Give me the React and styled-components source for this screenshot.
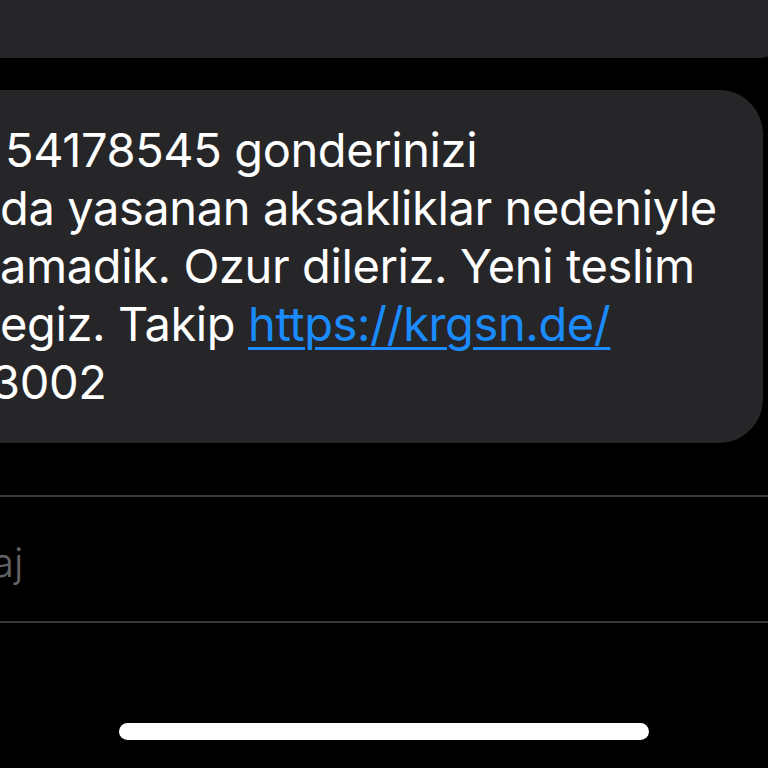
import React from "react";
import styled, { createGlobalStyle } from "styled-components";

const lines = [
  { indent: 5, parts: [{ text: "54178545 gonderinizi" }] },
  { indent: 0, parts: [{ text: "da yasanan aksakliklar nedeniyle" }] },
  { indent: 0, parts: [{ text: "amadik. Ozur dileriz. Yeni teslim" }] },
  {
    indent: 0,
    parts: [{ text: "egiz. Takip " }, { text: "https://krgsn.de/", link: true }],
  },
  { indent: -9, parts: [{ text: "3002" }] },
];

const GlobalStyle = createGlobalStyle`
  html, body {
    margin: 0;
    padding: 0;
    background: #000;
    overflow: hidden;
  }
  body {
    font-family: Inter, "Noto Sans", "Liberation Sans", sans-serif;
  }
`;

const Screen = styled.div`
  width: 768px;
  height: 768px;
  background: #000;
  display: flex;
  flex-direction: column;
  overflow: hidden;
`;

const Bubble = styled.div`
  margin-left: -60px;
  width: ${(p) => p.$width}px;
  background: #262629;
  border-radius: ${(p) => p.$radius};
  box-sizing: border-box;
  flex-shrink: 0;
`;

const TopBubble = styled(Bubble)`
  height: 58px;
`;

const MessageBubble = styled(Bubble)`
  margin-top: 32px;
  height: 353px;
  padding: 31px 0 0 60px;
`;

const Line = styled.div`
  margin-left: ${(p) => p.$indent}px;
  font-size: 47px;
  line-height: 58px;
  color: #fff;
  white-space: nowrap;
  letter-spacing: -0.4px;
`;

const Link = styled.span`
  color: #1a8cff;
  text-decoration: underline;
  text-decoration-thickness: 3px;
  text-underline-offset: 6px;
`;

const InputRow = styled.div`
  margin-top: 52px;
  height: 124px;
  border-top: 2px solid #3a3a3c;
  border-bottom: 2px solid #3a3a3c;
  display: flex;
  align-items: center;
  flex-shrink: 0;
`;

const Placeholder = styled.span`
  margin-left: -8px;
  margin-top: 6px;
  font-size: 40px;
  color: #636366;
  font-weight: 300;
`;

const HomeArea = styled.div`
  flex: 1;
  display: flex;
  justify-content: center;
  padding-top: 100px;
`;

const HomeIndicator = styled.div`
  width: 530px;
  height: 17px;
  border-radius: 9px;
  background: #fff;
`;

export default function App() {
  return (
    <>
      <GlobalStyle />
      <Screen>
        <TopBubble $width={843} $radius="0 0 24px 0" />
        <MessageBubble $width={823} $radius="0 44px 44px 0">
          {lines.map((line, i) => (
            <Line key={i} $indent={line.indent}>
              {line.parts.map((part, j) =>
                part.link ? (
                  <Link key={j}>{part.text}</Link>
                ) : (
                  <span key={j}>{part.text}</span>
                )
              )}
            </Line>
          ))}
        </MessageBubble>
        <InputRow>
          <Placeholder>aj</Placeholder>
        </InputRow>
        <HomeArea>
          <HomeIndicator />
        </HomeArea>
      </Screen>
    </>
  );
}
